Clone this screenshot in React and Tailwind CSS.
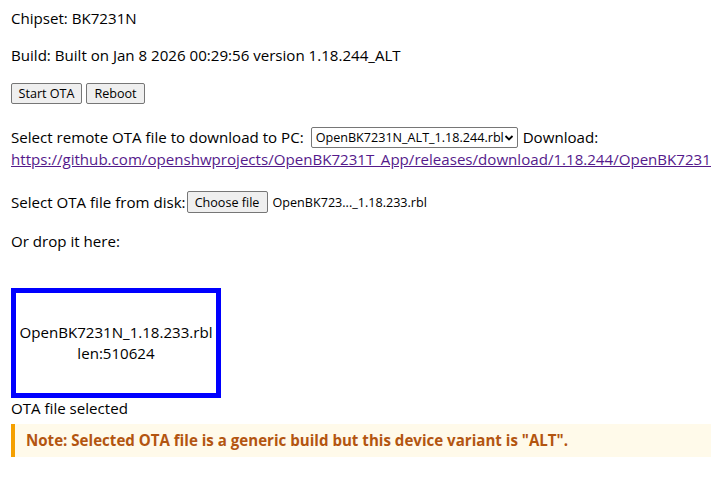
export default function App() {
  const btn =
    "h-[21px] px-[6px] bg-[#efefef] border border-[#767676] rounded-[2px] text-[12.6px] leading-[19px] text-black";
  return (
    <div className="w-[711px] h-[485px] overflow-hidden bg-white pl-[11px] font-['Segoe_UI','Open_Sans',sans-serif] text-[15.1px] leading-[21px] text-black">
      <p className="pt-[8px]">Chipset: BK7231N</p>
      <p className="mt-[16px]">Build: Built on Jan 8 2026 00:29:56 version 1.18.244_ALT</p>
      <div className="mt-[17px] flex gap-[4px]">
        <button className={btn + " w-[71px]"}>Start OTA</button>
        <button className={btn + " w-[59px]"}>Reboot</button>
      </div>
      <div className="mt-[23px] whitespace-nowrap">
        <div className="flex items-center h-[21px]">
          <span>Select remote OTA file to download to PC:</span>
          <div className="ml-[7px] h-[21px] w-[207px] flex items-center justify-between border border-[#767676] rounded-[2px] bg-white pl-[4px] pr-[3px] text-[12.6px]">
            <span>OpenBK7231N_ALT_1.18.244.rbl</span>
            <svg width="10" height="8" viewBox="0 0 10 8" className="shrink-0">
              <path d="M1.5 2 L5 5.5 L8.5 2" fill="none" stroke="black" strokeWidth="1.8" />
            </svg>
          </div>
          <span className="ml-[5px]">Download:</span>
        </div>
        <a href="#" className="block mt-[1px] text-[#551a8b] underline">
          https://github.com/openshwprojects/OpenBK7231T_App/releases/download/1.18.244/OpenBK7231N_ALT_1.18.244.rbl
        </a>
      </div>
      <div className="mt-[21px] flex items-center h-[22px]">
        <span>Select OTA file from disk:</span>
        <button className={btn + " h-[22px] ml-[1px] w-[81px]"}>Choose file</button>
        <span className="ml-[5px] text-[12.6px]">OpenBK723..._1.18.233.rbl</span>
      </div>
      <p className="mt-[18px]">Or drop it here:</p>
      <div className="mt-[36px] w-[210px] h-[110px] border-[5px] border-[#0000ff] flex flex-col items-center justify-center text-center">
        <span>OpenBK7231N_1.18.233.rbl</span>
        <span>len:510624</span>
      </div>
      <p>OTA file selected</p>
      <div className="mt-[5px] h-[33px] flex items-center border-l-[4px] border-[#f5a000] bg-[#fffaea] pl-[11px] font-bold text-[#b35510]">
        Note: Selected OTA file is a generic build but this device variant is "ALT".
      </div>
    </div>
  );
}
